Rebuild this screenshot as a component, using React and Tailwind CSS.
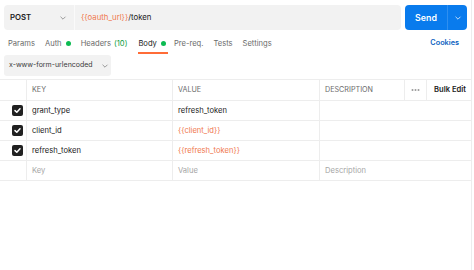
import React from "react";

const Chevron = ({ className = "", color = "#8f8f8f" }) => (
  <svg width="8" height="8" viewBox="0 0 8 8" className={className}>
    <path d="M1.8 3 L4 5.2 L6.2 3" fill="none" stroke={color} strokeWidth="0.9" strokeLinecap="round" strokeLinejoin="round" />
  </svg>
);

const Check = () => (
  <div className="w-[11px] h-[11px] rounded-[2px] bg-[#212121] flex items-center justify-center">
    <svg width="9" height="9" viewBox="0 0 9 9">
      <path d="M2 4.6 L3.8 6.3 L7 2.8" fill="none" stroke="#fff" strokeWidth="1.5" strokeLinecap="round" strokeLinejoin="round" />
    </svg>
  </div>
);

const Dot = () => <span className="inline-block w-[5px] h-[5px] rounded-full bg-[#0cbb52] ml-[4px]" />;

const rows = [
  { key: "grant_type", value: "refresh_token", v: false },
  { key: "client_id", value: "{{client_id}}", v: true },
  { key: "refresh_token", value: "{{refresh_token}}", v: true },
];

export default function App() {
  return (
    <div className="w-[474px] h-[270px] bg-white overflow-hidden text-[#212121] whitespace-nowrap" style={{ fontFamily: "Inter, 'Noto Sans', sans-serif" }}>
      <div className="w-[472px] h-full border-r border-[#ededed] flex flex-col">
        {/* top bar */}
        <div className="flex px-[4px] pt-[5px] gap-[4px]">
          <div className="flex flex-1 h-[25px] rounded-[4px] bg-[#f2f2f2] overflow-hidden">
            <div className="w-[71px] flex items-center justify-between pl-[6px] pr-[7px] border-r border-[#fafafa]">
              <span className="text-[7.8px] font-semibold">POST</span>
              <Chevron />
            </div>
            <div className="flex items-center pl-[6px] text-[7.8px]">
              <span className="text-[#f0794f]">{"{{oauth_url}}"}</span>
              <span>/token</span>
            </div>
          </div>
          <div className="w-[62px] h-[25px] rounded-[4px] bg-[#097bed] flex text-white">
            <div className="flex-1 flex items-center justify-center text-[8.8px] font-semibold border-r border-[#2f8ff0]">Send</div>
            <div className="w-[19px] flex items-center justify-center">
              <Chevron color="#cfe4fb" />
            </div>
          </div>
        </div>

        {/* tabs */}
        <div className="flex items-stretch h-[24px] pt-[3px] pl-[8px] pr-[12px] text-[7.6px] text-[#6b6b6b]">
          <div className="flex items-center">Params</div>
          <div className="flex items-center ml-[10px]">Auth<Dot /></div>
          <div className="flex items-center ml-[10px]">Headers<span className="text-[#0a9e43] ml-[3px]">(10)</span></div>
          <div className="flex items-center ml-[11px] relative text-[#212121]">
            Body<Dot />
            <div className="absolute left-0 right-[-2px] bottom-0 h-[2px] bg-[#ff6c37]" />
          </div>
          <div className="flex items-center ml-[8px]">Pre-req.</div>
          <div className="flex items-center ml-[10px]">Tests</div>
          <div className="flex items-center ml-[10px]">Settings</div>
          <div className="flex items-center ml-auto text-[#0b5fbf] font-semibold text-[7.3px]">Cookies</div>
        </div>

        {/* dropdown */}
        <div className="pl-[4px] mt-[1px]">
          <div className="w-[107px] h-[21px] rounded-[3px] bg-[#f2f2f2] flex items-center pl-[5px] text-[7px] text-[#3a3a3a]">
            <span className="whitespace-nowrap">x-www-form-urlencoded</span>
            <Chevron className="ml-[8px]" />
          </div>
        </div>

        {/* table */}
        <div className="mt-[3px] text-[7.6px]">
          <div className="flex h-[22px] border-y border-[#ededed] text-[7.2px] text-[#6b6b6b]">
            <div className="w-[27px] border-r border-[#ededed]" />
            <div className="w-[146px] border-r border-[#ededed] flex items-center pl-[5px]">KEY</div>
            <div className="w-[147px] border-r border-[#ededed] flex items-center pl-[5px]">VALUE</div>
            <div className="w-[85px] border-r border-[#ededed] flex items-center pl-[5px]">DESCRIPTION</div>
            <div className="w-[22px] border-r border-[#ededed] flex items-center justify-center">
              <svg width="9" height="4" viewBox="0 0 9 4"><circle cx="1.5" cy="2" r="1" fill="#9a9a9a" /><circle cx="4.5" cy="2" r="1" fill="#9a9a9a" /><circle cx="7.5" cy="2" r="1" fill="#9a9a9a" /></svg>
            </div>
            <div className="flex-1 flex items-center pl-[7px] text-[#212121] font-semibold text-[7.6px]">Bulk Edit</div>
          </div>
          {rows.map((r) => (
            <div key={r.key} className="flex h-[20px] border-b border-[#ededed]">
              <div className="w-[27px] border-r border-[#ededed] flex items-center pl-[12px]"><Check /></div>
              <div className="w-[146px] border-r border-[#ededed] flex items-center pl-[5px]">{r.key}</div>
              <div className={"w-[147px] border-r border-[#ededed] flex items-center pl-[5px] " + (r.v ? "text-[#f0794f]" : "")}>{r.value}</div>
              <div className="flex-1" />
            </div>
          ))}
          <div className="flex h-[20px] border-b border-[#ededed] text-[#a6a6a6]">
            <div className="w-[27px] border-r border-[#ededed]" />
            <div className="w-[146px] border-r border-[#ededed] flex items-center pl-[5px]">Key</div>
            <div className="w-[147px] border-r border-[#ededed] flex items-center pl-[5px]">Value</div>
            <div className="flex-1 flex items-center pl-[5px]">Description</div>
          </div>
        </div>
      </div>
    </div>
  );
}
